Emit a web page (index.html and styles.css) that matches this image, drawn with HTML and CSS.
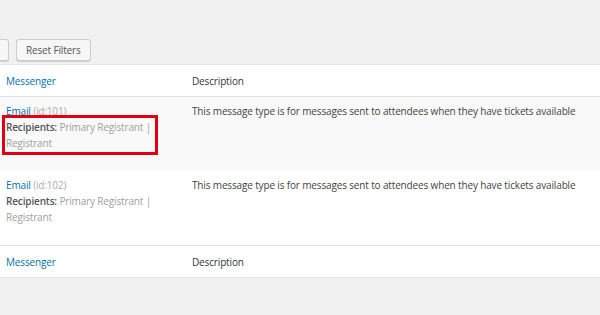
FILE: index.html
```html
<!DOCTYPE html>
<html lang="en">
<head>
    <meta charset="UTF-8">
    <meta name="viewport" content="width=device-width, initial-scale=1.0">
    <title>Messages</title>
    <link rel="stylesheet" href="styles.css">
</head>
<body>
    <div class="tablenav">
        <button class="button filter">Filter</button>
        <button class="button">Reset Filters</button>
    </div>
    <table class="list-table">
        <thead>
            <tr>
                <th class="col-messenger"><a href="#">Messenger</a></th>
                <th>Description</th>
            </tr>
        </thead>
        <tbody>
            <tr class="alternate">
                <td class="col-messenger">
                    <a href="#">Email</a> <span class="id">(id:101)</span>
                    <div class="recipients highlight"><strong>Recipients:</strong> Primary Registrant | Registrant</div>
                </td>
                <td>This message type is for messages sent to attendees when they have tickets available</td>
            </tr>
            <tr>
                <td class="col-messenger">
                    <a href="#">Email</a> <span class="id">(id:102)</span>
                    <div class="recipients"><strong>Recipients:</strong> Primary Registrant | Registrant</div>
                </td>
                <td>This message type is for messages sent to attendees when they have tickets available</td>
            </tr>
        </tbody>
        <tfoot>
            <tr>
                <th class="col-messenger"><a href="#">Messenger</a></th>
                <th>Description</th>
            </tr>
        </tfoot>
    </table>
</body>
</html>
```

FILE: styles.css
```css
body {
    margin: 0;
    padding-top: 39px;
    background: #f1f1f1;
    font-family: 'Open Sans', 'Noto Sans', sans-serif;
    font-size: 10px;
    letter-spacing: -0.15px;
    color: #444;
    overflow: hidden;
}

a {
    color: #0073aa;
    text-decoration: none;
}

.tablenav {
    display: flex;
    gap: 7px;
    margin-left: -51px;
    height: 25px;
}

.button {
    height: 22px;
    padding: 0 9px;
    background: #f7f7f7;
    border: 1px solid #ccc;
    border-radius: 3px;
    box-shadow: 0 1px 0 #ccc;
    font-family: inherit;
    font-size: 10px;
    letter-spacing: inherit;
    color: #555;
    cursor: pointer;
}

.button.filter {
    width: 60px;
    color: transparent;
}

.list-table {
    width: 640px;
    margin-left: -5px;
    border-collapse: collapse;
    background: #fff;
    border: 1px solid #e5e5e5;
    box-shadow: 0 1px 1px rgba(0, 0, 0, 0.04);
}

th, td {
    text-align: left;
    vertical-align: top;
    padding: 8px 10px;
    line-height: 16px;
    font-weight: normal;
}

th {
    color: #32373c;
    height: 16px;
}

thead th {
    border-bottom: 1px solid #e1e1e1;
    padding-top: 8px;
    padding-bottom: 7px;
}

tfoot th {
    border-top: 1px solid #e1e1e1;
    padding-bottom: 7px;
}

td {
    padding-top: 6px;
    padding-bottom: 20px;
}

.col-messenger {
    width: 160px;
    padding-right: 16px;
}

tr.alternate td {
    background: #f9f9f9;
}

.id {
    color: #aaa;
}

.recipients {
    color: #a0a0a0;
    width: 148px;
}

.recipients strong {
    color: #555;
    font-weight: 600;
}

.highlight {
    outline: 3px solid #e0000f;
    outline-offset: 1px;
}
```
